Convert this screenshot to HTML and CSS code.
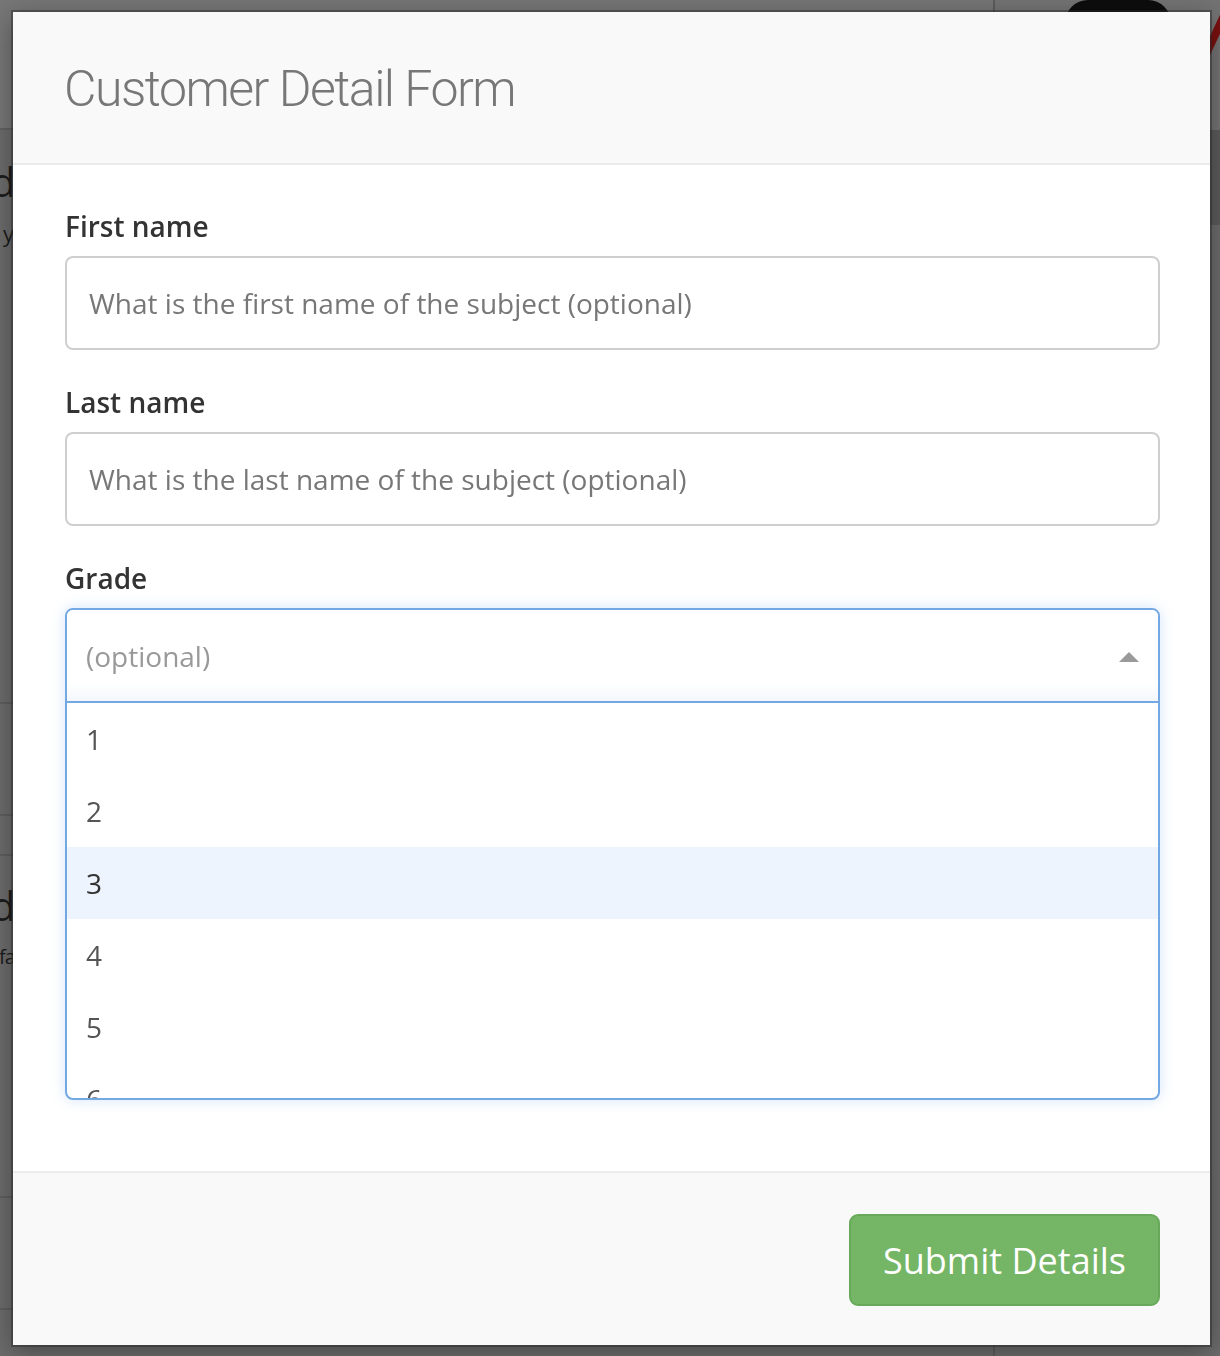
FILE: index.html
```html
<!DOCTYPE html>
<html lang="en">
<head>
<meta charset="utf-8">
<title>Customer Detail Form</title>
<link rel="stylesheet" href="styles.css">
</head>
<body>
<div class="page">
  <div class="bg-main">
    <div class="bg-top"></div>
    <div class="bg-row bg-row-title">
      <div class="bg-h">d</div>
      <div class="bg-p">y</div>
    </div>
    <div class="bg-row bg-row-a"></div>
    <div class="bg-row bg-row-b"></div>
    <div class="bg-row bg-row-title2">
      <div class="bg-h">d</div>
      <div class="bg-p bg-p-tight">fa</div>
    </div>
    <div class="bg-row bg-row-c"></div>
    <div class="bg-row bg-row-d"></div>
  </div>
  <div class="bg-side">
    <div class="bg-side-top">
      <div class="bg-logo"></div>
      <div class="bg-red"></div>
    </div>
    <div class="bg-side-band"></div>
  </div>
</div>

<div class="overlay">
  <div class="modal">
    <div class="modal-header">
      <h1 class="modal-title">Customer Detail Form</h1>
    </div>
    <form class="modal-body">
      <div class="field">
        <label class="field-label" for="first">First name</label>
        <input class="field-input" id="first" type="text" placeholder="What is the first name of the subject (optional)">
      </div>
      <div class="field">
        <label class="field-label" for="last">Last name</label>
        <input class="field-input" id="last" type="text" placeholder="What is the last name of the subject (optional)">
      </div>
      <div class="field field-last">
        <label class="field-label">Grade</label>
        <div class="select">
          <div class="select-head">
            <span class="select-placeholder">(optional)</span>
            <span class="caret"></span>
          </div>
          <ul class="options">
            <li class="option">1</li>
            <li class="option">2</li>
            <li class="option option-active">3</li>
            <li class="option">4</li>
            <li class="option">5</li>
            <li class="option">6</li>
          </ul>
        </div>
      </div>
    </form>
    <div class="modal-footer">
      <button class="btn-submit" type="button">Submit Details</button>
    </div>
  </div>
</div>
</body>
</html>
```

FILE: styles.css
```css
* { box-sizing: border-box; }

html, body {
  margin: 0;
  padding: 0;
}

body {
  width: 1220px;
  height: 1356px;
  overflow: hidden;
  background: #6b6b6b;
  font-family: "Open Sans", "Liberation Sans", sans-serif;
}

/* ---------- background page (dimmed) ---------- */
.page {
  display: grid;
  grid-template-columns: 993px 1fr;
  height: 1356px;
}

.bg-main {
  display: flex;
  flex-direction: column;
}

.bg-top {
  height: 130px;
  background: #767676;
  border-bottom: 2px solid #616161;
}

.bg-row {
  border-bottom: 2px solid #5e5e5e;
}

.bg-row-title {
  height: 574px;
  padding-top: 32px;
}

.bg-row-a { height: 112px; }
.bg-row-b { height: 40px; }

.bg-row-title2 {
  height: 342px;
  padding-top: 30px;
}

.bg-row-c { height: 112px; }
.bg-row-d { flex: 1; border-bottom: 0; }

.bg-h {
  font-size: 40px;
  line-height: 40px;
  color: #1c1c1c;
  margin-left: -9px;
}

.bg-p {
  font-size: 22px;
  line-height: 30px;
  color: #1c1c1c;
  margin-left: 3px;
  margin-top: 16px;
}

.bg-p-tight {
  font-size: 20px;
  margin-left: -1px;
  letter-spacing: -1px;
}

.bg-side {
  border-left: 2px solid #5c5c5c;
  display: flex;
  flex-direction: column;
}

.bg-side-top {
  height: 130px;
  background: #737373;
  display: flex;
  padding-left: 70px;
}

.bg-logo {
  width: 106px;
  height: 40px;
  background: #0d0d0d;
  border-radius: 40px 40px 30px 30px;
}

.bg-red {
  width: 8px;
  height: 50px;
  margin-left: 40px;
  margin-top: 10px;
  background: #7a1010;
  transform: rotate(25deg);
}

.bg-side-band {
  height: 95px;
  background: #5a5a5a;
}

/* ---------- overlay + modal ---------- */
.overlay {
  position: fixed;
  inset: 0;
  padding: 12px 10px 11px 13px;
  display: flex;
}

.modal {
  flex: 1;
  display: flex;
  flex-direction: column;
  background: #fff;
  box-shadow: 0 0 0 2px rgba(40, 40, 40, 0.45), 0 6px 24px rgba(0, 0, 0, 0.35);
}

.modal-header {
  height: 153px;
  background: #f9f9f9;
  border-bottom: 2px solid #ebebeb;
  display: flex;
  align-items: center;
  padding-left: 51px;
}

.modal-title {
  margin: 0;
  font-family: "Roboto", "Liberation Sans", sans-serif;
  font-weight: 300;
  font-size: 50px;
  line-height: 60px;
  color: #777;
  letter-spacing: -1.5px;
  padding-top: 2px;
}

.modal-body {
  flex: 1;
  margin: 0;
  padding: 43px 50px 0 52px;
}

.field {
  display: flex;
  flex-direction: column;
  margin-bottom: 34px;
}

.field-label {
  font-size: 28px;
  line-height: 36px;
  font-weight: 600;
  color: #333;
  margin-bottom: 12px;
}

.field-input {
  height: 94px;
  width: 100%;
  border: 2px solid #cfcfcf;
  border-radius: 8px;
  padding: 0 22px;
  font-family: "Open Sans", "Liberation Sans", sans-serif;
  font-size: 28px;
  color: #555;
  background: #fff;
  outline: none;
}

.field-input::placeholder {
  color: #777;
}

/* ---------- select ---------- */
.select {
  border: 2px solid #73a8e2;
  border-radius: 8px;
  box-shadow: 0 0 14px rgba(102, 160, 230, 0.28);
  background: #fff;
  overflow: hidden;
}

.select-head {
  height: 93px;
  border-bottom: 2px solid #73a8e2;
  display: flex;
  align-items: center;
  justify-content: space-between;
  padding: 0 19px 0 19px;
  background: linear-gradient(to bottom, #fff 80%, #f3f7fd 100%);
}

.select-placeholder {
  font-size: 28px;
  color: #999;
}

.caret {
  width: 0;
  height: 0;
  border-left: 10px solid transparent;
  border-right: 10px solid transparent;
  border-bottom: 10px solid #9a9a9a;
  margin-top: 2px;
}

.options {
  list-style: none;
  margin: 0;
  padding: 0;
  height: 395px;
  overflow: hidden;
}

.option {
  height: 72px;
  line-height: 72px;
  padding-left: 19px;
  font-size: 28px;
  color: #555;
}

.option-active {
  background: #edf4fd;
  color: #333;
}

/* ---------- footer ---------- */
.modal-footer {
  height: 174px;
  background: #f9f9f9;
  border-top: 2px solid #ececec;
  display: flex;
  align-items: center;
  justify-content: flex-end;
  padding-right: 50px;
}

.btn-submit {
  width: 311px;
  height: 92px;
  background: #74b566;
  border: 2px solid #69a95b;
  border-radius: 9px;
  color: #fff;
  font-family: "Open Sans", "Liberation Sans", sans-serif;
  font-size: 36px;
  padding: 0;
  margin-top: 2px;
}
```
